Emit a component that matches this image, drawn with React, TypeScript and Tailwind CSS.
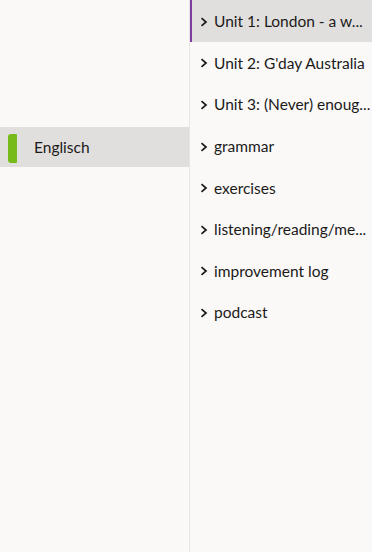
export default function App() {
  const sections = [
    'Unit 1: London - a w...',
    "Unit 2: G'day Australia",
    'Unit 3: (Never) enoug...',
    'grammar',
    'exercises',
    'listening/reading/me...',
    'improvement log',
    'podcast',
  ];
  return (
    <div className="flex h-[552px] w-[372px] bg-[#faf9f8] text-[#1b1a19]" style={{ fontFamily: 'Lato, "Open Sans", sans-serif' }}>
      <div className="w-[190px] shrink-0 border-r border-[#e8e6e4] pt-[127px]">
        <div className="flex h-[40px] items-center bg-[#e1dfdd] pt-[2px]">
          <div className="ml-[8px] h-[29px] w-[9px] rounded-l-[3px] rounded-r-[1px] bg-[#77bb1b]" />
          <span className="ml-[17px] text-[15.5px]">Englisch</span>
        </div>
      </div>
      <div className="min-w-0 flex-1">
        {sections.map((s, i) => (
          <div
            key={s}
            className={
              'flex h-[41.6px] items-center pl-[8px] pt-[2px] ' +
              (i === 0 ? 'border-l-2 border-[#7f3c9e] bg-[#e1dfdd]' : 'border-l-2 border-transparent')
            }
          >
            <svg width="8" height="10" viewBox="0 0 8 10" className="mr-[6px] shrink-0">
              <path d="M1.5 1.2 L6 5 L1.5 8.8" fill="none" stroke="#1b1a19" strokeWidth="1.7" />
            </svg>
            <span className="whitespace-nowrap text-[15.5px]">{s}</span>
          </div>
        ))}
      </div>
    </div>
  );
}
